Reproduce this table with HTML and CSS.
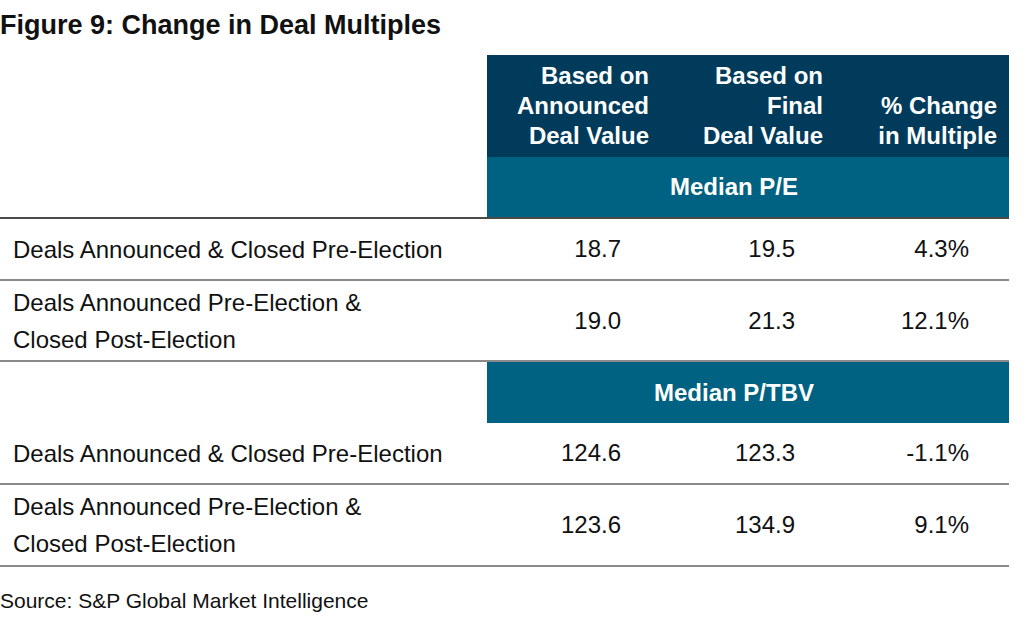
FILE: index.html
```html
<!DOCTYPE html>
<html>
<head>
<meta charset="utf-8">
<link rel="stylesheet" href="styles.css">
</head>
<body>
<div class="figure">
  <h1 class="title">Figure 9: Change in Deal Multiples</h1>
  <div class="table">
    <div class="row head">
      <div class="blank"></div>
      <div class="hcell">Based on<br>Announced<br>Deal Value</div>
      <div class="hcell">Based on<br>Final<br>Deal Value</div>
      <div class="hcell"><br>% Change<br>in Multiple</div>
    </div>
    <div class="row band first-band">
      <div class="blank"></div>
      <div class="bandcell">Median P/E</div>
    </div>
    <div class="row data single">
      <div class="label">Deals Announced &amp; Closed Pre-Election</div>
      <div class="num">18.7</div>
      <div class="num">19.5</div>
      <div class="num">4.3%</div>
    </div>
    <div class="row data double">
      <div class="label">Deals Announced Pre-Election &amp;<br>Closed Post-Election</div>
      <div class="num">19.0</div>
      <div class="num">21.3</div>
      <div class="num">12.1%</div>
    </div>
    <div class="row band">
      <div class="blank"></div>
      <div class="bandcell">Median P/TBV</div>
    </div>
    <div class="row data single">
      <div class="label">Deals Announced &amp; Closed Pre-Election</div>
      <div class="num">124.6</div>
      <div class="num">123.3</div>
      <div class="num">-1.1%</div>
    </div>
    <div class="row data double">
      <div class="label">Deals Announced Pre-Election &amp;<br>Closed Post-Election</div>
      <div class="num">123.6</div>
      <div class="num">134.9</div>
      <div class="num">9.1%</div>
    </div>
  </div>
  <p class="source">Source: S&amp;P Global Market Intelligence</p>
</div>
</body>
</html>
```

FILE: styles.css
```css
html, body {
  margin: 0;
  padding: 0;
  background: #ffffff;
}

body {
  font-family: "Liberation Sans", Arial, sans-serif;
  color: #111111;
}

.figure {
  width: 1024px;
  height: 640px;
}

.title {
  margin: 0;
  height: 55px;
  padding-top: 10px;
  box-sizing: border-box;
  font-size: 27px;
  line-height: 30px;
  font-weight: bold;
}

.table {
  width: 1009px;
}

.row {
  display: grid;
  grid-template-columns: 487px 174px 174px 174px;
}

.head {
  height: 102px;
}

.head .hcell {
  background: #003b5c;
  color: #ffffff;
  font-weight: bold;
  font-size: 24px;
  line-height: 30px;
  text-align: right;
  padding: 6px 12px 0 0;
}

.band {
  grid-template-columns: 487px 522px;
}

.band .bandcell {
  background: #006282;
  color: #ffffff;
  font-weight: bold;
  font-size: 24px;
  text-align: center;
  display: flex;
  align-items: center;
  justify-content: center;
  padding-right: 28px;
}

.first-band {
  height: 60px;
  border-bottom: 2px solid #4a4a4a;
}

.band:not(.first-band) {
  height: 61px;
}

.data {
  border-bottom: 2px solid #8a8a8a;
  font-size: 24px;
}

.single {
  height: 60px;
}

.double {
  height: 79px;
}

.double:last-child {
  height: 80px;
}

.label {
  padding-left: 13px;
  line-height: 37px;
  display: flex;
  align-items: center;
}

.num {
  text-align: right;
  padding-right: 40px;
  display: flex;
  align-items: center;
  justify-content: flex-end;
}

.source {
  margin: 0;
  padding-top: 22px;
  font-size: 21px;
  line-height: 24px;
}
```
